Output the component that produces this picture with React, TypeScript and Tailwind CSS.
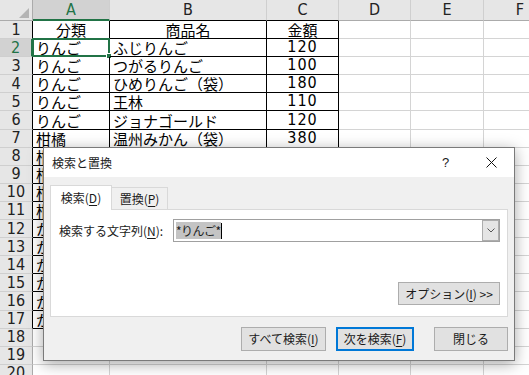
import React from 'react'

const cols = ['A', 'B', 'C', 'D', 'E', 'F']

// rows 8-17: only column A peeks out from behind the dialog
const table: string[][] = [
  ['分類', '商品名', '金額'],
  ['りんご', 'ふじりんご', '120'],
  ['りんご', 'つがるりんご', '100'],
  ['りんご', 'ひめりんご（袋）', '180'],
  ['りんご', '王林', '110'],
  ['りんご', 'ジョナゴールド', '120'],
  ['柑橘', '温州みかん（袋）', '380'],
  ['柑橘', '', ''],
  ['柑橘', '', ''],
  ['柑橘', '', ''],
  ['柑橘', '', ''],
  ['か', '', ''],
  ['か', '', ''],
  ['か', '', ''],
  ['か', '', ''],
  ['か', '', ''],
  ['か', '', ''],
]

const jp = "font-['Noto_Sans_CJK_JP',sans-serif]"
const narrow = "font-['Liberation_Sans_Narrow','DejaVu_Sans_Condensed','Liberation_Sans',sans-serif]"

function HeaderRow() {
  return (
    <>
      <div className="relative bg-[#e6e6e6] border-r border-b border-[#ababab]">
        <svg className="absolute right-[3px] bottom-[2px]" width="10" height="10" viewBox="0 0 10 10">
          <polygon points="10,0 10,10 0,10" fill="#b4b4b4" />
        </svg>
      </div>
      {cols.map((c, i) => {
        let cls = 'bg-[#e6e6e6] border-r border-[#cfcfcf] border-b border-b-[#ababab]'
        if (i === 0) cls = 'bg-[#d2d2d2] text-[#217346] border-r border-[#cfcfcf] border-b-2 border-b-[#217346]'
        else if (i < 3) cls = 'bg-[#e6e6e6] border-r border-[#cfcfcf] border-b border-b-[#000]'
        return (
          <div key={c} className={`flex items-center justify-center text-[16px] leading-none text-[#222] ${narrow} ${cls}`}>
            {c}
          </div>
        )
      })}
    </>
  )
}

function Row({ n }: { n: number }) {
  const cells = table[n - 1]
  const inTable = n <= table.length
  const headCls =
    n === 2
      ? 'bg-[#d2d2d2] text-[#217346] border-r-2 border-r-[#217346]'
      : inTable
        ? 'bg-[#e6e6e6] text-[#222] border-r border-r-black'
        : 'bg-[#e6e6e6] text-[#222] border-r border-r-[#ababab]'
  return (
    <>
      <div className={`flex items-center justify-center text-[16px] leading-none border-b border-b-[#cfcfcf] ${narrow} ${headCls}`}>
        {n}
      </div>
      {cols.map((c, i) => {
        const text = cells && i < 3 ? cells[i] : ''
        const border = inTable && i < 3 ? 'border-r border-b border-black' : 'border-r border-b border-[#d4d4d4]'
        const center = n === 1 || i === 2
        const isNum = i === 2 && n > 1
        return (
          <div
            key={c}
            className={`relative flex items-end whitespace-nowrap pb-[1px] ${center ? 'justify-center' : 'pl-[3px]'} ${border}`}
          >
            {text && (
              <span className={isNum ? `text-[16px] leading-none tracking-[1px] ${narrow}` : `text-[15px] leading-none ${jp}`}>
                {text}
              </span>
            )}
            {n === 2 && i === 0 && (
              <div className="absolute -left-px -top-px -right-px -bottom-px border-2 border-[#217346]">
                <div className="absolute -right-[4px] -bottom-[4px] w-[6px] h-[6px] bg-[#217346] border border-white" />
              </div>
            )}
          </div>
        )
      })}
    </>
  )
}

function Btn({ children, main, className }: { children: React.ReactNode; main?: boolean; className: string }) {
  return (
    <div
      className={`flex items-center justify-center bg-[#e1e1e1] text-[12px] leading-none ${
        main ? 'border-2 border-[#0078d7]' : 'border border-[#adadad]'
      } ${className}`}
    >
      {children}
    </div>
  )
}

function FindDialog() {
  return (
    <div className={`absolute left-[43px] top-[147px] w-[472px] h-[214px] flex flex-col bg-[#f0f0f0] border border-[#7a7a7a] shadow-[0_3px_14px_rgba(0,0,0,0.35)] text-[#1a1a1a] ${jp}`}>
      <div className="h-[29px] flex items-center bg-white">
        <span className="pl-[8px] text-[12px] leading-none">検索と置換</span>
        <div className="ml-auto flex h-full">
          <div className="w-[45px] flex items-center justify-center text-[13px] font-['Liberation_Sans',sans-serif]">?</div>
          <div className="w-[46px] flex items-center justify-center">
            <svg width="11" height="11" viewBox="0 0 11 11">
              <path d="M0.5 0.5 L10.5 10.5 M10.5 0.5 L0.5 10.5" stroke="#111" strokeWidth="1" />
            </svg>
          </div>
        </div>
      </div>

      <div className="flex-1 flex flex-col px-[6px] pt-[8px]">
        <div className="flex items-end h-[24px]">
          <div className="relative z-10 -mb-px w-[62px] h-[25px] flex items-center justify-center bg-white border border-b-0 border-[#d9d9d9] text-[12px] leading-none">
            検索(<span className="underline underline-offset-2">D</span>)
          </div>
          <div className="w-[56px] h-[22px] flex items-center justify-center border border-l-0 border-b-0 border-[#d9d9d9] text-[12px] leading-none">
            置換(<span className="underline underline-offset-2">P</span>)
          </div>
        </div>
        <div className="h-[108px] flex flex-col bg-white border border-[#d9d9d9] pl-[8px] pr-[7px] pt-[9px] pb-[11px]">
          <div className="flex items-center justify-between">
            <span className="text-[12px] leading-none">
              検索する文字列(<span className="underline underline-offset-2">N</span>):
            </span>
            <div className="w-[327px] h-[23px] flex border border-[#a0a0a0] bg-white">
              <div className="flex-1 flex items-center pl-[2px]">
                <span className="bg-[#c4c4c4] text-[12px] leading-[17px] tracking-[-0.5px]">*りんご*</span>
                <span className="w-px h-[16px] bg-black" />
              </div>
              <div className="w-[17px] h-full flex items-center justify-center bg-[#e5e5e5] border border-[#adadad]">
                <svg width="8" height="5" viewBox="0 0 8 5">
                  <path d="M0.5 0.5 L4 4 L7.5 0.5" fill="none" stroke="#555" strokeWidth="1" />
                </svg>
              </div>
            </div>
          </div>
          <div className="mt-auto flex justify-end">
            <Btn className="w-[102px] h-[23px]">
              オプション(<span className="underline underline-offset-2">I</span>) &gt;&gt;
            </Btn>
          </div>
        </div>
        <div className="mt-[10px] flex justify-end">
          <Btn className="w-[85px] h-[24px]">
            すべて検索(<span className="underline underline-offset-2">I</span>)
          </Btn>
          <Btn main className="ml-[10px] w-[78px] h-[24px]">
            次を検索(<span className="underline underline-offset-2">F</span>)
          </Btn>
          <Btn className="ml-[20px] w-[74px] h-[24px]">
            閉じる
          </Btn>
        </div>
      </div>
    </div>
  )
}

export default function App() {
  const rows = Array.from({ length: 20 }, (_, i) => i + 1)
  return (
    <div className="relative w-[529px] h-[375px] overflow-hidden bg-white text-black">
      <div className="grid grid-cols-[33px_77px_157px_72px_72px_73px_73px] grid-rows-[21px_repeat(20,18.1px)] w-[557px]">
        <HeaderRow />
        {rows.map((n) => (
          <Row key={n} n={n} />
        ))}
      </div>
      <FindDialog />
    </div>
  )
}
